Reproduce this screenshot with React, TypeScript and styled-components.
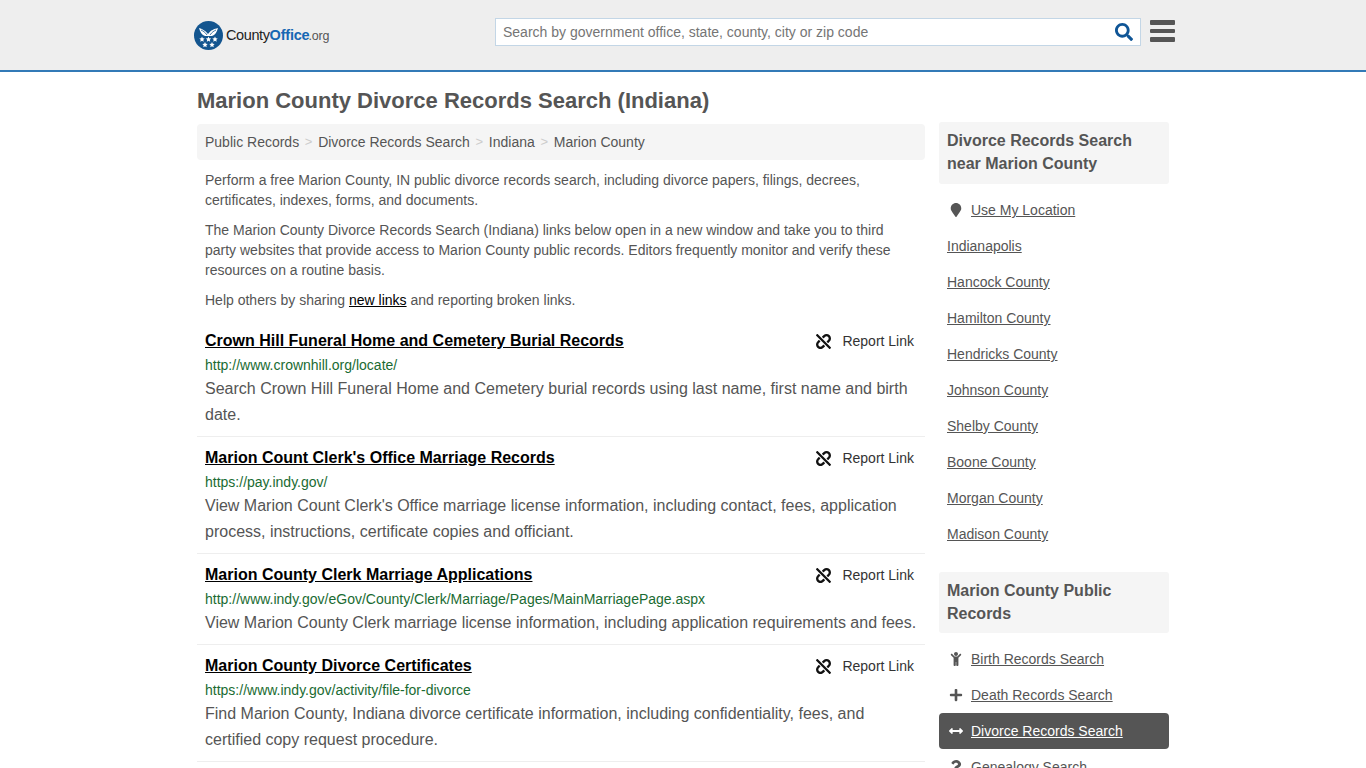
import styled, { createGlobalStyle } from 'styled-components';
import { FaSearch, FaUnlink, FaMapMarker, FaChild, FaPlus, FaArrowsAltH, FaQuestion } from 'react-icons/fa';
import type { ReactNode } from 'react';

const GlobalStyle = createGlobalStyle`
    html, body {
        margin: 0;
        height: 768px;
        overflow: hidden;
        background: #fff;
    }
    body {
        font-family: "Liberation Sans", Arial, sans-serif;
        font-size: 14px;
        line-height: 20px;
        color: #555;
    }
`;

const Header = styled.header`
    box-sizing: border-box;
    height: 72px;
    background: #eee;
    border-bottom: 2px solid #337ab7;
`;

const HeaderInner = styled.div`
    width: 981px;
    margin: 0 0 0 194px;
    display: flex;
    align-items: flex-start;
`;

const Logo = styled.div`
    width: 301px;
    height: 70px;
    display: flex;
    align-items: center;
    gap: 3px;
`;

const LogoText = styled.span`
    font-family: "Liberation Sans", Arial, sans-serif;
    font-size: 14.5px;
    letter-spacing: -0.4px;
    color: #222;
    b { font-weight: 700; color: #1767b3; letter-spacing: -0.2px; }
    small { font-size: 12.5px; color: #555; letter-spacing: -0.2px; margin-left: -1px; }
`;

const SearchBox = styled.div`
    box-sizing: border-box;
    width: 646px;
    height: 28px;
    margin-top: 18px;
    background: #fff;
    border: 1px solid #c3d6e6;
    display: flex;
    align-items: center;
    justify-content: space-between;
    padding: 0 7px;
    color: #757575;
    svg { color: #0f5596; font-size: 18px; margin-right: 0; }
`;

const Burger = styled.div`
    margin: 20px 0 0 9px;
    width: 25px;
    display: flex;
    flex-direction: column;
    gap: 4px;
    i {
        display: block;
        height: 4.5px;
        background: #555;
        border-radius: 1px;
    }
`;

const Page = styled.div`
    width: 972px;
    margin-left: 197px;
    display: grid;
    grid-template-columns: 728px 230px;
    column-gap: 14px;
`;

const Title = styled.h1`
    grid-column: 1 / 3;
    margin: 15px 0 10px;
    font-size: 22px;
    line-height: 27px;
    font-weight: 700;
    color: #555;
`;

const Sidebar = styled.aside`
    margin-top: -2px;
`;

const Crumbs = styled.nav`
    height: 36px;
    padding: 0 8px;
    background: #f5f5f5;
    border-radius: 4px;
    display: flex;
    align-items: center;
    margin-bottom: 10px;
    span { color: #ccc; padding: 0 5.7px; font-size: 13px; }
`;

const Para = styled.p`
    margin: 0 0 10px;
    padding: 0 8px;
    a { color: #000; text-decoration: underline; }
`;

const Result = styled.article`
    padding: 0 8px 8px;
    margin-top: 11px;
    border-bottom: 1px solid #eee;
`;

const FirstResults = styled.div`
    margin-top: 21px;
`;

const ResultTop = styled.div`
    display: flex;
    justify-content: space-between;
    align-items: center;
    height: 20px;
`;

const ResultTitle = styled.a`
    font-size: 16px;
    font-weight: 700;
    color: #000;
    text-decoration: underline;
`;

const Report = styled.span`
    display: flex;
    align-items: center;
    gap: 11px;
    margin-right: 3px;
    color: #333;
    svg { font-size: 15px; color: #111; }
`;

const Url = styled.div`
    margin-top: 4px;
    color: #1a6b32;
`;

const Desc = styled.div`
    margin-top: 1px;
    font-size: 16px;
    line-height: 26px;
    color: #555;
`;

const BoxHead = styled.h3<{ $tight?: boolean }>`
    margin: 0 0 8px;
    padding: 7px 8px ${p => (p.$tight ? '8px' : '9px')};
    background: #f5f5f5;
    border-radius: 3px;
    font-size: 16px;
    line-height: 23px;
    font-weight: 700;
    color: #555;
`;

const SideList = styled.div`
    margin-bottom: 20px;
`;

const SideRow = styled.div<{ $active?: boolean }>`
    height: 36px;
    display: flex;
    align-items: center;
    padding: 0 8px;
    border-radius: 4px;
    background: ${p => (p.$active ? '#555' : 'transparent')};
    color: ${p => (p.$active ? '#fff' : '#555')};
    a { color: inherit; text-decoration: underline; }
`;

const SideIcon = styled.span`
    width: 24px;
    flex: none;
    display: flex;
    justify-content: center;
    padding-right: 6px;
    box-sizing: border-box;
    font-size: 14px;
`;

const EagleLogo = () => (
    <svg width="29" height="29" viewBox="0 0 29 29">
        <circle cx="14.5" cy="14.5" r="14.5" fill="#13558f" />
        <path d="M5 7c3 1 6 2 9 6 3-4 6-5 10-6-1 4-3 7-6 8h-7C8 14 6 11 5 7z" fill="#fff" />
        <path d="M7 9c2 1 4 2 6 5M22 9c-2 1-4 2-6 5" stroke="#13558f" strokeWidth="0.8" fill="none" />
        <g fill="#fff">
            <path d="M8 15.5l.8 1.8 1.9.2-1.4 1.3.4 1.9-1.7-1-1.7 1 .4-1.9-1.4-1.3 1.9-.2z" />
            <path d="M14.5 15.5l.8 1.8 1.9.2-1.4 1.3.4 1.9-1.7-1-1.7 1 .4-1.9-1.4-1.3 1.9-.2z" />
            <path d="M21 15.5l.8 1.8 1.9.2-1.4 1.3.4 1.9-1.7-1-1.7 1 .4-1.9-1.4-1.3 1.9-.2z" />
            <path d="M11 21l.8 1.8 1.9.2-1.4 1.3.4 1.9-1.7-1-1.7 1 .4-1.9-1.4-1.3 1.9-.2z" />
            <path d="M18 21l.8 1.8 1.9.2-1.4 1.3.4 1.9-1.7-1-1.7 1 .4-1.9-1.4-1.3 1.9-.2z" />
        </g>
    </svg>
);

const results = [
    {
        title: 'Crown Hill Funeral Home and Cemetery Burial Records',
        url: 'http://www.crownhill.org/locate/',
        desc: 'Search Crown Hill Funeral Home and Cemetery burial records using last name, first name and birth date.',
    },
    {
        title: "Marion Count Clerk's Office Marriage Records",
        url: 'https://pay.indy.gov/',
        desc: "View Marion Count Clerk's Office marriage license information, including contact, fees, application process, instructions, certificate copies and officiant.",
    },
    {
        title: 'Marion County Clerk Marriage Applications',
        url: 'http://www.indy.gov/eGov/County/Clerk/Marriage/Pages/MainMarriagePage.aspx',
        desc: 'View Marion County Clerk marriage license information, including application requirements and fees.',
    },
    {
        title: 'Marion County Divorce Certificates',
        url: 'https://www.indy.gov/activity/file-for-divorce',
        desc: 'Find Marion County, Indiana divorce certificate information, including confidentiality, fees, and certified copy request procedure.',
    },
];

const nearby = ['Indianapolis', 'Hancock County', 'Hamilton County', 'Hendricks County', 'Johnson County', 'Shelby County', 'Boone County', 'Morgan County', 'Madison County'];

const publicRecords: { label: string; icon: ReactNode; active?: boolean }[] = [
    { label: 'Birth Records Search', icon: <FaChild /> },
    { label: 'Death Records Search', icon: <FaPlus /> },
    { label: 'Divorce Records Search', icon: <FaArrowsAltH />, active: true },
    { label: 'Genealogy Search', icon: <FaQuestion /> },
];

const App = () => {
    return (
        <>
            <GlobalStyle />
            <Header>
                <HeaderInner>
                    <Logo>
                        <EagleLogo />
                        <LogoText>County<b>Office</b><small>.org</small></LogoText>
                    </Logo>
                    <SearchBox>
                        Search by government office, state, county, city or zip code
                        <FaSearch />
                    </SearchBox>
                    <Burger><i /><i /><i /></Burger>
                </HeaderInner>
            </Header>
            <Page>
                <Title>Marion County Divorce Records Search (Indiana)</Title>
                <main>
                    <Crumbs>
                        Public Records<span>&gt;</span>Divorce Records Search<span>&gt;</span>Indiana<span>&gt;</span>Marion County
                    </Crumbs>
                    <Para>Perform a free Marion County, IN public divorce records search, including divorce papers, filings, decrees, certificates, indexes, forms, and documents.</Para>
                    <Para>The Marion County Divorce Records Search (Indiana) links below open in a new window and take you to third party websites that provide access to Marion County public records. Editors frequently monitor and verify these resources on a routine basis.</Para>
                    <Para>Help others by sharing <a href="#">new links</a> and reporting broken links.</Para>
                    <FirstResults>
                        {results.map((r, i) => (
                            <Result key={i}>
                                <ResultTop>
                                    <ResultTitle href="#">{r.title}</ResultTitle>
                                    <Report><FaUnlink />Report Link</Report>
                                </ResultTop>
                                <Url>{r.url}</Url>
                                <Desc>{r.desc}</Desc>
                            </Result>
                        ))}
                    </FirstResults>
                </main>
                <Sidebar>
                    <SideList>
                        <BoxHead>Divorce Records Search near Marion County</BoxHead>
                        <SideRow>
                            <SideIcon><FaMapMarker /></SideIcon>
                            <a href="#">Use My Location</a>
                        </SideRow>
                        {nearby.map(name => (
                            <SideRow key={name}><a href="#">{name}</a></SideRow>
                        ))}
                    </SideList>
                    <div>
                        <BoxHead $tight>Marion County Public Records</BoxHead>
                        {publicRecords.map(item => (
                            <SideRow key={item.label} $active={item.active}>
                                <SideIcon>{item.icon}</SideIcon>
                                <a href="#">{item.label}</a>
                            </SideRow>
                        ))}
                    </div>
                </Sidebar>
            </Page>
        </>
    );
};

export default App;
